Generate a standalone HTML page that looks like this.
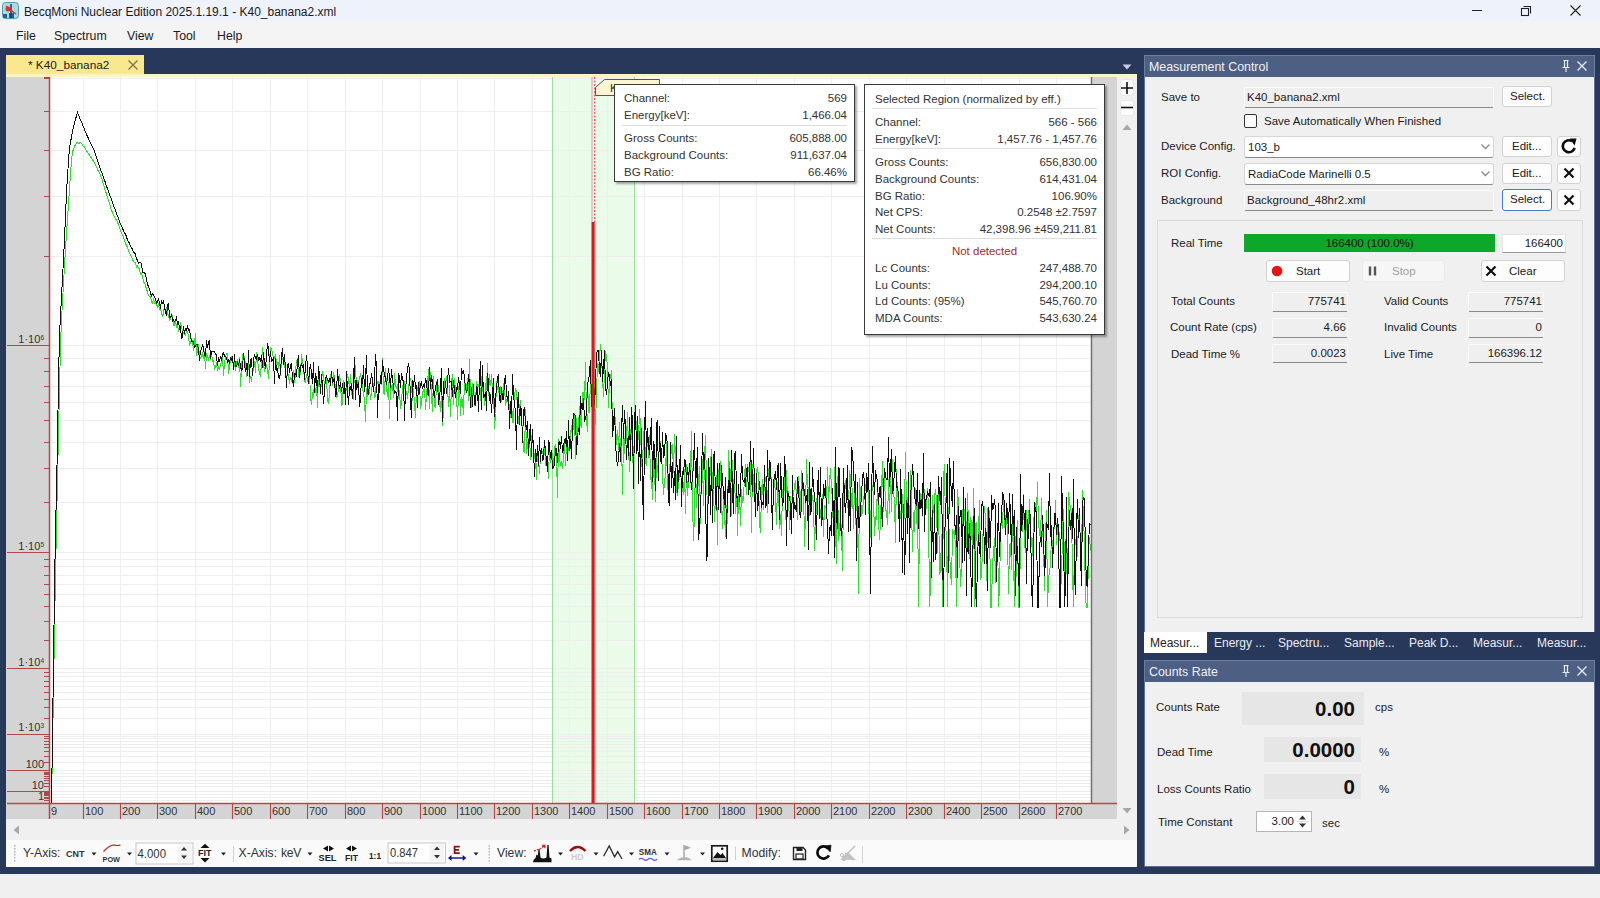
<!DOCTYPE html>
<html><head><meta charset="utf-8">
<style>
*{box-sizing:border-box;margin:0;padding:0}
html,body{width:1600px;height:898px;overflow:hidden;background:#f0f0f0;font-family:"Liberation Sans",sans-serif;color:#1b1b1b}
.a{position:absolute}
.t{position:absolute;white-space:pre;line-height:14px;font-size:11.5px}
#title{left:0;top:0;width:1600px;height:21px;background:#eef2fa}
#menu{left:0;top:21px;width:1600px;height:27px;background:#f4f4f4}
#navy{left:0;top:48px;width:1600px;height:826px;background:#28385a}
.yl{position:absolute;left:6px;width:38px;text-align:right;font-size:11px;line-height:14px;color:#333;white-space:pre}
.yl sup{font-size:6.5px;vertical-align:top;position:relative;top:-1.5px}
.xl{position:absolute;top:804px;font-size:11px;line-height:14px;color:#333;white-space:pre}
.tip{position:absolute;background:#fff;border:1px solid #3a3a3a;box-shadow:2px 2px 2px rgba(0,0,0,.35)}
.tip .t{font-size:11.5px;color:#333}
.btn{position:absolute;background:#fdfdfd;border:1px solid #d2d2d2;border-radius:3px}
.fld{position:absolute;background:#efefef;border:1px solid #fbfbfb;border-bottom:1.5px solid #8a8a8a;border-radius:2px}
.cmb{position:absolute;background:#fff;border:1px solid #d6d6d6;border-bottom:1px solid #8a8a8a;border-radius:3px}
.bfld{position:absolute;background:#e6e6e6}
</style></head><body>
<div id="title" class="a"></div>
<svg class="a" style="left:2px;top:2px" width="17" height="17" viewBox="0 0 17 17">
<rect x="0.5" y="0.5" width="16" height="16" rx="3" fill="#a9dbe0" stroke="#4e9cb0"/>
<path d="M1 12 L5 12 L5 16 L1 16Z M7 11 L12 11 L12 16 L7 16Z" fill="#2a5d93"/>
<path d="M9 2 V16" stroke="#1f3b6b" stroke-width="1.5"/>
<circle cx="6" cy="7" r="2.5" fill="#e0302a"/>
<path d="M4 4 Q8 8 14 12" stroke="#d0342c" stroke-width="1.2" fill="none"/>
</svg>
<div class="t" style="left:24px;top:5px;font-size:12px;color:#1a1a1a">BecqMoni Nuclear Edition 2025.1.19.1 - K40_banana2.xml</div>
<svg class="a" style="left:1460px;top:0" width="140" height="23">
<path d="M12 10.5H22" stroke="#222" stroke-width="1"/>
<rect x="61.5" y="8.5" width="7" height="7" fill="none" stroke="#222" stroke-width="1.1"/>
<path d="M63.5 6.5H70.5V13.5" fill="none" stroke="#222" stroke-width="1.1"/>
<path d="M110.5 5.5L120.5 15.5M120.5 5.5L110.5 15.5" stroke="#222" stroke-width="1.1"/>
</svg>
<div id="menu" class="a"></div>
<div class="t" style="left:16px;top:29px;font-size:12.3px">File</div>
<div class="t" style="left:54px;top:29px;font-size:12.3px">Spectrum</div>
<div class="t" style="left:127px;top:29px;font-size:12.3px">View</div>
<div class="t" style="left:173px;top:29px;font-size:12.3px">Tool</div>
<div class="t" style="left:217px;top:29px;font-size:12.3px">Help</div>
<div id="navy" class="a"></div>

<!-- document tab -->
<div class="a" style="left:6px;top:55px;width:138px;height:20px;background:#fae88f"></div>
<div class="t" style="left:28px;top:58px;font-size:11.8px;color:#222">* K40_banana2</div>
<svg class="a" style="left:126px;top:58px" width="14" height="14"><path d="M2.5 2.5L11.5 11.5M11.5 2.5L2.5 11.5" stroke="#7a7456" stroke-width="1.3"/></svg>
<svg class="a" style="left:1121px;top:63px" width="12" height="8"><path d="M1.5 1.5H10.5L6 6.5Z" fill="#c5cde4"/></svg>
<div class="a" style="left:6px;top:74px;width:1131px;height:3px;background:#fcf5c2"></div>

<!-- document content -->
<div class="a" style="left:6px;top:77px;width:1131px;height:790px;background:#f0f0f0"></div>
<div class="a" style="left:6px;top:77px;width:43px;height:742px;background:#d4d4d4"></div>
<div class="a" style="left:50px;top:77px;width:1041px;height:726px;background:#fff"></div>
<div class="a" style="left:1092px;top:77px;width:25px;height:742px;background:#d4d4d4"></div>
<div class="a" style="left:6px;top:803px;width:1111px;height:16px;background:#d4d4d4"></div>
<div class="a" style="left:6px;top:840px;width:1131px;height:27px;background:#fafafa"></div>

<svg class="a" style="left:0;top:0" width="1600" height="898">
<rect x="552" y="77" width="82.5" height="726" fill="#eafbea"/>
<path d="M50 78.5H1091M50 111.5H1091M50 150.5H1091M50 196.5H1091M50 256.5H1091M50 345.5H1091M50 358.5H1091M50 371.5H1091M50 386.5H1091M50 402.5H1091M50 420.5H1091M50 442.5H1091M50 468.5H1091M50 502.5H1091M50 552.5H1091M50 559.5H1091M50 566.5H1091M50 575.5H1091M50 584.5H1091M50 594.5H1091M50 606.5H1091M50 621.5H1091M50 640.5H1091M50 668.5H1091M50 672.5H1091M50 676.5H1091M50 681.5H1091M50 686.5H1091M50 692.5H1091M50 699.5H1091M50 707.5H1091M50 718.5H1091M50 734.5H1091M50 736.5H1091M50 738.5H1091M50 741.5H1091M50 744.5H1091M50 747.5H1091M50 751.5H1091M50 756.5H1091M50 762.5H1091M50 770.5H1091M50 773.5H1091M50 776.5H1091M50 780.5H1091M50 783.5H1091M50 786.5H1091M50 791.5H1091M50 794.5H1091M50 797.5H1091M50 800.5H1091M50 803.5H1091" stroke="#eeeeee" stroke-width="1" fill="none"/>
<path d="M83.5 77V803M120.5 77V803M157.5 77V803M195.5 77V803M232.5 77V803M270.5 77V803M307.5 77V803M345.5 77V803M382.5 77V803M420.5 77V803M457.5 77V803M494.5 77V803M532.5 77V803M569.5 77V803M607.5 77V803M644.5 77V803M682.5 77V803M719.5 77V803M756.5 77V803M794.5 77V803M831.5 77V803M869.5 77V803M906.5 77V803M944.5 77V803M981.5 77V803M1019.5 77V803M1056.5 77V803" stroke="#efefef" stroke-width="1" fill="none"/>
<path d="M552.5 77V803M634.5 77V803" stroke="#9be39b" stroke-width="1"/>
<path d="M51.5 803.0L52.5 747.7L53.5 690.0L54.5 630.0L55.5 575.0L56.5 525.1L57.5 477.9L58.5 433.7L59.5 389.4L60.5 345.2L61.5 319.5L62.5 301.7L63.5 283.9L64.5 265.9L65.5 248.6L66.5 233.5L67.5 218.6L68.5 203.6L69.5 188.6L70.5 174.3L71.5 160.2L72.5 151.8L73.5 149.4L74.5 146.7L75.5 144.5L76.5 143.0L77.5 142.7L78.5 143.2L79.5 143.0L80.5 142.3L81.5 143.4L82.5 145.1L83.5 146.3L84.5 147.1L85.5 148.5L86.5 151.0L87.5 152.0L88.5 153.6L89.5 155.3L90.5 157.3L91.5 157.8L92.5 160.0L93.5 161.1L94.5 163.2L95.5 164.5L96.5 166.8L97.5 169.6L98.5 171.3L99.5 172.8L100.5 175.7L101.5 177.5L102.5 180.5L103.5 184.6L104.5 187.8L105.5 191.3L106.5 193.7L107.5 197.4L108.5 200.0L109.5 203.7L110.5 206.8L111.5 210.4L112.5 212.6L113.5 215.0L114.5 217.5L115.5 218.4L116.5 220.5L117.5 221.9L118.5 225.1L119.5 227.3L120.5 230.1L121.5 233.3L122.5 235.3L123.5 237.0L124.5 240.3L125.5 243.9L126.5 244.8L127.5 248.1L128.5 250.6L129.5 253.2L130.5 254.9L131.5 256.4L132.5 260.0L133.5 260.6L134.5 262.8L135.5 262.8L136.5 267.3L137.5 265.6L138.5 268.8L139.5 269.0L140.5 274.6L141.5 273.8L142.5 276.4L143.5 282.3L144.5 282.4L145.5 285.5L146.5 289.3L147.5 291.5L148.5 295.9L149.5 296.1L150.5 296.6L151.5 301.0L152.5 304.3L153.5 298.0L154.5 303.1L155.5 302.9L156.5 304.8L157.5 306.8L158.5 304.2L159.5 309.0L160.5 308.2L161.5 314.3L162.5 316.2L163.5 312.8L164.5 305.7L165.5 312.8L166.5 307.4L167.5 313.9L168.5 314.9L169.5 320.0L170.5 318.9L171.5 312.8L172.5 316.3L173.5 325.0L174.5 325.6L175.5 319.0L176.5 328.2L177.5 323.0L178.5 332.4L179.5 326.5L180.5 323.5L181.5 327.5L182.5 331.2L183.5 332.6L184.5 334.7L185.5 335.3L186.5 330.3L187.5 331.3L188.5 335.9L189.5 345.7L190.5 342.7L191.5 339.3L192.5 341.5L193.5 351.1L194.5 341.8L195.5 333.5L196.5 356.3L197.5 350.8L198.5 344.1L199.5 357.5L200.5 358.5L201.5 355.4L202.5 353.4L203.5 359.4L204.5 351.4L205.5 369.4L206.5 353.8L207.5 355.7L208.5 359.2L209.5 356.1L210.5 358.4L211.5 350.9L212.5 362.2L213.5 359.8L214.5 369.0L215.5 367.5L216.5 361.9L217.5 371.1L218.5 366.5L219.5 370.2L220.5 364.7L221.5 360.8L222.5 355.6L223.5 375.9L224.5 363.7L225.5 356.7L226.5 353.5L227.5 353.5L228.5 373.7L229.5 367.1L230.5 359.7L231.5 357.3L232.5 362.1L233.5 362.4L234.5 362.8L235.5 370.5L236.5 363.8L237.5 359.3L238.5 368.0L239.5 357.1L240.5 387.0L241.5 368.6L242.5 353.9L243.5 360.0L244.5 356.0L245.5 365.9L246.5 376.8L247.5 371.5L248.5 356.1L249.5 383.2L250.5 375.6L251.5 381.9L252.5 371.4L253.5 370.1L254.5 361.5L255.5 372.8L256.5 351.8L257.5 359.7L258.5 368.6L259.5 372.8L260.5 377.2L261.5 362.3L262.5 346.6L263.5 364.0L264.5 371.6L265.5 362.3L266.5 366.1L267.5 369.4L268.5 379.1L269.5 360.7L270.5 347.0L271.5 349.8L272.5 352.4L273.5 360.1L274.5 358.2L275.5 353.8L276.5 364.4L277.5 361.7L278.5 369.0L279.5 354.9L280.5 375.7L281.5 360.2L282.5 359.1L283.5 359.8L284.5 361.6L285.5 374.0L286.5 375.7L287.5 374.7L288.5 374.9L289.5 383.8L290.5 376.9L291.5 379.6L292.5 383.8L293.5 370.2L294.5 382.9L295.5 372.5L296.5 360.6L297.5 359.1L298.5 376.7L299.5 366.7L300.5 375.2L301.5 354.0L302.5 361.5L303.5 367.0L304.5 380.9L305.5 382.2L306.5 373.8L307.5 380.4L308.5 383.1L309.5 373.1L310.5 395.5L311.5 405.4L312.5 393.3L313.5 395.4L314.5 383.1L315.5 392.5L316.5 385.0L317.5 407.7L318.5 367.8L319.5 379.3L320.5 394.0L321.5 380.8L322.5 371.4L323.5 375.8L324.5 386.2L325.5 378.8L326.5 376.2L327.5 400.4L328.5 403.7L329.5 393.6L330.5 376.3L331.5 371.5L332.5 386.1L333.5 371.8L334.5 377.3L335.5 389.3L336.5 397.5L337.5 396.6L338.5 388.5L339.5 374.5L340.5 380.5L341.5 405.5L342.5 404.4L343.5 380.5L344.5 387.2L345.5 400.6L346.5 381.6L347.5 374.1L348.5 380.1L349.5 387.7L350.5 374.1L351.5 393.2L352.5 395.6L353.5 399.6L354.5 367.8L355.5 365.4L356.5 388.6L357.5 381.3L358.5 382.7L359.5 377.2L360.5 374.3L361.5 379.8L362.5 388.6L363.5 393.7L364.5 399.9L365.5 422.1L366.5 388.2L367.5 397.3L368.5 386.5L369.5 388.1L370.5 399.5L371.5 392.7L372.5 381.6L373.5 384.4L374.5 397.3L375.5 395.6L376.5 379.4L377.5 383.2L378.5 382.2L379.5 387.8L380.5 377.1L381.5 384.9L382.5 358.3L383.5 392.1L384.5 395.3L385.5 367.8L386.5 387.6L387.5 396.7L388.5 381.9L389.5 418.8L390.5 382.0L391.5 387.3L392.5 384.4L393.5 398.1L394.5 372.7L395.5 384.3L396.5 388.5L397.5 384.0L398.5 399.3L399.5 390.3L400.5 408.8L401.5 403.4L402.5 385.6L403.5 387.9L404.5 380.6L405.5 398.2L406.5 391.2L407.5 398.8L408.5 387.0L409.5 380.9L410.5 377.8L411.5 383.7L412.5 401.1L413.5 388.4L414.5 404.8L415.5 417.7L416.5 389.3L417.5 390.6L418.5 382.8L419.5 382.0L420.5 408.5L421.5 403.9L422.5 392.1L423.5 391.1L424.5 386.9L425.5 409.5L426.5 395.1L427.5 383.9L428.5 369.5L429.5 408.8L430.5 372.5L431.5 395.4L432.5 411.5L433.5 375.6L434.5 406.1L435.5 407.5L436.5 382.6L437.5 378.8L438.5 390.7L439.5 401.2L440.5 412.2L441.5 390.1L442.5 425.7L443.5 411.7L444.5 378.2L445.5 383.5L446.5 376.2L447.5 386.1L448.5 407.1L449.5 385.2L450.5 417.3L451.5 382.4L452.5 374.3L453.5 405.0L454.5 378.2L455.5 390.6L456.5 393.3L457.5 420.1L458.5 393.1L459.5 379.9L460.5 415.9L461.5 397.5L462.5 400.6L463.5 414.5L464.5 377.5L465.5 390.5L466.5 390.2L467.5 378.1L468.5 401.2L469.5 358.8L470.5 397.1L471.5 407.5L472.5 382.8L473.5 386.2L474.5 405.0L475.5 404.3L476.5 380.9L477.5 387.9L478.5 386.5L479.5 380.9L480.5 400.8L481.5 376.3L482.5 392.3L483.5 383.4L484.5 406.0L485.5 383.3L486.5 389.6L487.5 363.2L488.5 395.8L489.5 374.4L490.5 385.6L491.5 374.3L492.5 391.1L493.5 388.1L494.5 428.8L495.5 413.5L496.5 381.5L497.5 389.6L498.5 385.3L499.5 399.3L500.5 385.8L501.5 401.9L502.5 398.5L503.5 382.8L504.5 385.3L505.5 406.3L506.5 400.3L507.5 398.5L508.5 404.5L509.5 404.7L510.5 418.1L511.5 398.4L512.5 422.6L513.5 422.9L514.5 394.2L515.5 389.1L516.5 390.4L517.5 410.3L518.5 424.0L519.5 408.3L520.5 400.3L521.5 420.4L522.5 429.7L523.5 450.9L524.5 453.3L525.5 409.4L526.5 453.9L527.5 444.0L528.5 441.0L529.5 435.9L530.5 459.6L531.5 436.2L532.5 438.2L533.5 446.8L534.5 458.2L535.5 456.2L536.5 480.2L537.5 445.1L538.5 460.8L539.5 473.8L540.5 455.9L541.5 450.0L542.5 452.5L543.5 450.0L544.5 444.4L545.5 466.0L546.5 456.4L547.5 455.4L548.5 479.3L549.5 444.8L550.5 462.5L551.5 454.7L552.5 453.9L553.5 469.0L554.5 446.9L555.5 444.8L556.5 454.8L557.5 498.2L558.5 439.5L559.5 458.5L560.5 464.8L561.5 462.5L562.5 468.9L563.5 456.6L564.5 441.3L565.5 465.5L566.5 443.8L567.5 454.6L568.5 447.9L569.5 448.2L570.5 436.4L571.5 424.8L572.5 438.3L573.5 423.2L574.5 413.3L575.5 459.0L576.5 418.0L577.5 432.5L578.5 427.8L579.5 406.1L580.5 423.1L581.5 427.8L582.5 392.5L583.5 392.7L584.5 400.3L585.5 362.4L586.5 420.2L587.5 431.5L588.5 396.3L589.5 412.6L590.5 376.8L591.5 392.6L592.5 390.9L593.5 377.6L594.5 396.3L595.5 424.9L596.5 393.4L597.5 362.7L598.5 371.8L599.5 357.6L600.5 343.6L601.5 358.1L602.5 378.3L603.5 396.5L604.5 371.2L605.5 351.3L606.5 356.6L607.5 367.7L608.5 407.9L609.5 378.7L610.5 378.1L611.5 370.1L612.5 431.2L613.5 424.0L614.5 413.1L615.5 421.4L616.5 445.3L617.5 430.1L618.5 449.7L619.5 421.9L620.5 452.5L621.5 437.1L622.5 494.7L623.5 435.4L624.5 453.6L625.5 423.8L626.5 440.9L627.5 412.5L628.5 448.1L629.5 472.1L630.5 432.0L631.5 425.5L632.5 455.1L633.5 470.1L634.5 423.3L635.5 418.1L636.5 424.6L637.5 438.0L638.5 440.3L639.5 409.3L640.5 425.1L641.5 464.3L642.5 469.9L643.5 432.0L644.5 431.1L645.5 461.4L646.5 466.1L647.5 430.1L648.5 457.7L649.5 434.9L650.5 479.8L651.5 477.8L652.5 500.0L653.5 457.1L654.5 466.6L655.5 502.4L656.5 456.6L657.5 473.1L658.5 467.1L659.5 436.4L660.5 444.9L661.5 454.4L662.5 472.5L663.5 494.7L664.5 481.2L665.5 474.9L666.5 442.2L667.5 489.5L668.5 480.3L669.5 468.5L670.5 460.5L671.5 447.5L672.5 443.6L673.5 473.4L674.5 434.2L675.5 457.0L676.5 490.2L677.5 495.8L678.5 482.0L679.5 478.5L680.5 457.0L681.5 493.4L682.5 487.6L683.5 495.3L684.5 469.3L685.5 513.9L686.5 464.3L687.5 495.6L688.5 481.8L689.5 468.0L690.5 471.3L691.5 430.7L692.5 501.3L693.5 540.9L694.5 514.0L695.5 462.8L696.5 507.7L697.5 459.9L698.5 486.4L699.5 466.2L700.5 523.9L701.5 460.9L702.5 458.9L703.5 506.1L704.5 456.3L705.5 435.2L706.5 483.2L707.5 507.0L708.5 498.0L709.5 490.4L710.5 463.0L711.5 448.7L712.5 494.1L713.5 489.6L714.5 521.8L715.5 497.3L716.5 474.7L717.5 544.9L718.5 470.6L719.5 466.8L720.5 461.1L721.5 499.6L722.5 529.3L723.5 492.7L724.5 512.8L725.5 536.8L726.5 505.5L727.5 524.4L728.5 450.0L729.5 471.4L730.5 469.0L731.5 516.3L732.5 460.2L733.5 496.8L734.5 470.2L735.5 514.4L736.5 475.1L737.5 535.9L738.5 492.8L739.5 494.6L740.5 525.9L741.5 488.7L742.5 503.3L743.5 499.0L744.5 474.2L745.5 463.8L746.5 494.8L747.5 464.4L748.5 469.8L749.5 474.9L750.5 459.5L751.5 532.5L752.5 464.4L753.5 483.1L754.5 500.8L755.5 495.6L756.5 470.8L757.5 467.6L758.5 477.0L759.5 522.7L760.5 532.6L761.5 491.6L762.5 479.2L763.5 509.9L764.5 474.7L765.5 480.2L766.5 482.9L767.5 512.5L768.5 468.5L769.5 473.8L770.5 466.8L771.5 485.9L772.5 527.9L773.5 486.2L774.5 476.6L775.5 498.1L776.5 524.9L777.5 483.2L778.5 481.7L779.5 528.8L780.5 513.7L781.5 535.5L782.5 488.8L783.5 492.1L784.5 462.3L785.5 519.6L786.5 469.6L787.5 501.6L788.5 490.6L789.5 529.6L790.5 496.2L791.5 509.7L792.5 499.5L793.5 492.9L794.5 486.5L795.5 479.6L796.5 497.8L797.5 520.1L798.5 476.1L799.5 495.6L800.5 512.4L801.5 470.0L802.5 491.3L803.5 482.3L804.5 546.9L805.5 513.3L806.5 459.3L807.5 487.1L808.5 487.6L809.5 515.9L810.5 501.5L811.5 490.2L812.5 500.2L813.5 501.2L814.5 550.5L815.5 519.1L816.5 509.9L817.5 486.7L818.5 487.8L819.5 499.6L820.5 517.6L821.5 517.7L822.5 494.0L823.5 537.1L824.5 505.0L825.5 507.4L826.5 506.1L827.5 467.1L828.5 503.6L829.5 481.9L830.5 468.3L831.5 488.6L832.5 499.7L833.5 534.0L834.5 466.6L835.5 528.9L836.5 564.3L837.5 475.9L838.5 540.5L839.5 531.2L840.5 516.3L841.5 530.6L842.5 571.0L843.5 492.8L844.5 486.1L845.5 480.2L846.5 497.4L847.5 506.5L848.5 509.9L849.5 470.0L850.5 477.1L851.5 506.7L852.5 488.1L853.5 528.5L854.5 483.3L855.5 524.7L856.5 498.0L857.5 500.0L858.5 593.6L859.5 478.3L860.5 494.3L861.5 515.0L862.5 513.3L863.5 496.8L864.5 498.6L865.5 484.1L866.5 491.2L867.5 481.0L868.5 489.3L869.5 536.9L870.5 537.5L871.5 484.5L872.5 486.3L873.5 496.0L874.5 536.0L875.5 515.9L876.5 519.5L877.5 480.5L878.5 520.0L879.5 540.4L880.5 520.4L881.5 489.2L882.5 461.4L883.5 511.6L884.5 470.7L885.5 510.7L886.5 510.6L887.5 525.1L888.5 478.9L889.5 513.6L890.5 475.9L891.5 511.9L892.5 459.5L893.5 494.5L894.5 499.3L895.5 542.8L896.5 469.5L897.5 493.4L898.5 499.9L899.5 501.8L900.5 518.4L901.5 519.6L902.5 493.7L903.5 530.8L904.5 508.4L905.5 451.6L906.5 508.7L907.5 514.1L908.5 481.2L909.5 541.3L910.5 470.2L911.5 506.5L912.5 551.9L913.5 512.0L914.5 532.2L915.5 488.5L916.5 524.4L917.5 488.4L918.5 607.0L919.5 524.9L920.5 493.5L921.5 495.6L922.5 509.1L923.5 489.9L924.5 489.6L925.5 512.3L926.5 506.1L927.5 487.8L928.5 508.3L929.5 607.0L930.5 585.9L931.5 538.0L932.5 495.4L933.5 513.4L934.5 497.2L935.5 488.6L936.5 500.8L937.5 552.8L938.5 494.0L939.5 574.9L940.5 571.6L941.5 534.1L942.5 607.0L943.5 477.4L944.5 464.1L945.5 526.7L946.5 534.6L947.5 607.0L948.5 507.2L949.5 548.6L950.5 573.4L951.5 584.7L952.5 528.7L953.5 532.5L954.5 530.0L955.5 548.2L956.5 607.0L957.5 489.2L958.5 504.3L959.5 548.7L960.5 586.9L961.5 568.2L962.5 509.1L963.5 514.3L964.5 521.0L965.5 497.8L966.5 549.7L967.5 493.2L968.5 525.8L969.5 558.8L970.5 516.7L971.5 522.3L972.5 557.5L973.5 487.9L974.5 607.0L975.5 525.5L976.5 521.6L977.5 559.5L978.5 532.6L979.5 500.3L980.5 579.1L981.5 577.6L982.5 546.7L983.5 521.1L984.5 506.3L985.5 519.9L986.5 580.8L987.5 507.6L988.5 517.6L989.5 510.3L990.5 607.0L991.5 607.0L992.5 562.1L993.5 553.5L994.5 538.5L995.5 581.8L996.5 580.5L997.5 525.4L998.5 607.0L999.5 586.6L1000.5 536.9L1001.5 516.3L1002.5 529.0L1003.5 496.2L1004.5 527.8L1005.5 516.5L1006.5 513.6L1007.5 535.2L1008.5 594.0L1009.5 545.9L1010.5 543.2L1011.5 569.9L1012.5 516.7L1013.5 555.1L1014.5 607.0L1015.5 536.4L1016.5 576.9L1017.5 519.9L1018.5 607.0L1019.5 607.0L1020.5 535.1L1021.5 527.4L1022.5 532.4L1023.5 494.5L1024.5 543.3L1025.5 553.2L1026.5 510.2L1027.5 545.5L1028.5 521.7L1029.5 498.9L1030.5 539.0L1031.5 536.9L1032.5 555.7L1033.5 520.6L1034.5 513.8L1035.5 503.0L1036.5 512.7L1037.5 482.1L1038.5 527.8L1039.5 528.7L1040.5 542.8L1041.5 498.5L1042.5 530.7L1043.5 543.3L1044.5 590.9L1045.5 538.1L1046.5 509.6L1047.5 607.0L1048.5 580.1L1049.5 570.3L1050.5 566.0L1051.5 533.7L1052.5 548.5L1053.5 531.5L1054.5 527.1L1055.5 500.4L1056.5 544.6L1057.5 526.1L1058.5 544.1L1059.5 532.0L1060.5 548.7L1061.5 584.2L1062.5 525.9L1063.5 508.6L1064.5 574.0L1065.5 539.4L1066.5 539.7L1067.5 607.0L1068.5 491.9L1069.5 502.0L1070.5 508.5L1071.5 513.1L1072.5 572.1L1073.5 607.0L1074.5 542.9L1075.5 538.6L1076.5 550.4L1077.5 556.7L1078.5 515.4L1079.5 520.8L1080.5 543.3L1081.5 560.2L1082.5 490.0L1083.5 520.8L1084.5 540.7L1085.5 599.1L1086.5 607.0L1087.5 607.0L1088.5 553.2L1089.5 536.7L1090.5 551.2" stroke="#2ee02e" stroke-width="1" fill="none" shape-rendering="crispEdges"/>
<path d="M51.5 803.0L52.5 734.3L53.5 663.0L54.5 589.0L55.5 531.5L56.5 490.5L57.5 440.4L58.5 381.4L59.5 334.3L60.5 315.7L61.5 296.8L62.5 278.1L63.5 259.3L64.5 238.5L65.5 215.6L66.5 192.5L67.5 176.0L68.5 161.4L69.5 147.5L70.5 142.1L71.5 137.1L72.5 132.0L73.5 126.5L74.5 123.0L75.5 119.6L76.5 115.6L77.5 112.4L78.5 115.0L79.5 117.6L80.5 119.7L81.5 121.9L82.5 124.7L83.5 127.3L84.5 129.4L85.5 131.8L86.5 134.6L87.5 136.5L88.5 138.4L89.5 140.9L90.5 143.3L91.5 145.0L92.5 147.1L93.5 148.9L94.5 151.8L95.5 154.4L96.5 157.5L97.5 160.9L98.5 163.2L99.5 166.0L100.5 169.6L101.5 171.7L102.5 174.7L103.5 177.5L104.5 180.3L105.5 182.8L106.5 186.5L107.5 188.4L108.5 191.1L109.5 195.0L110.5 196.7L111.5 199.8L112.5 202.0L113.5 205.3L114.5 207.9L115.5 210.5L116.5 213.8L117.5 215.8L118.5 218.9L119.5 221.4L120.5 224.4L121.5 225.7L122.5 228.2L123.5 230.8L124.5 232.6L125.5 234.5L126.5 236.4L127.5 240.5L128.5 241.3L129.5 243.7L130.5 246.0L131.5 248.6L132.5 248.7L133.5 252.9L134.5 253.0L135.5 254.0L136.5 259.6L137.5 259.8L138.5 263.3L139.5 262.9L140.5 262.6L141.5 263.5L142.5 272.5L143.5 272.7L144.5 273.0L145.5 274.0L146.5 279.5L147.5 285.2L148.5 285.7L149.5 289.5L150.5 292.9L151.5 295.9L152.5 293.9L153.5 295.2L154.5 297.5L155.5 298.9L156.5 303.4L157.5 302.0L158.5 297.7L159.5 303.3L160.5 308.7L161.5 300.3L162.5 304.1L163.5 299.7L164.5 307.9L165.5 311.0L166.5 316.0L167.5 306.4L168.5 302.8L169.5 317.0L170.5 317.5L171.5 313.7L172.5 321.0L173.5 319.9L174.5 321.5L175.5 320.4L176.5 317.7L177.5 323.7L178.5 320.9L179.5 328.3L180.5 325.9L181.5 338.8L182.5 336.3L183.5 326.2L184.5 333.8L185.5 328.9L186.5 329.9L187.5 326.8L188.5 330.2L189.5 330.0L190.5 336.7L191.5 340.8L192.5 341.9L193.5 342.0L194.5 347.4L195.5 345.7L196.5 344.8L197.5 344.5L198.5 349.5L199.5 360.8L200.5 350.6L201.5 349.2L202.5 344.5L203.5 347.8L204.5 355.5L205.5 356.4L206.5 340.4L207.5 348.0L208.5 342.0L209.5 340.5L210.5 358.9L211.5 351.6L212.5 351.4L213.5 351.1L214.5 351.6L215.5 354.1L216.5 354.6L217.5 366.4L218.5 357.5L219.5 361.9L220.5 356.3L221.5 360.7L222.5 353.7L223.5 352.6L224.5 356.2L225.5 356.4L226.5 358.1L227.5 362.2L228.5 360.4L229.5 363.0L230.5 356.9L231.5 359.8L232.5 355.9L233.5 370.4L234.5 354.2L235.5 366.5L236.5 366.6L237.5 362.7L238.5 365.7L239.5 359.5L240.5 366.3L241.5 370.5L242.5 369.0L243.5 352.7L244.5 362.4L245.5 372.4L246.5 363.2L247.5 376.3L248.5 350.0L249.5 376.6L250.5 360.0L251.5 359.1L252.5 375.5L253.5 360.3L254.5 354.4L255.5 358.2L256.5 359.6L257.5 353.6L258.5 359.7L259.5 357.8L260.5 361.4L261.5 354.6L262.5 368.1L263.5 352.4L264.5 363.5L265.5 368.7L266.5 354.9L267.5 343.1L268.5 348.9L269.5 362.1L270.5 350.9L271.5 362.2L272.5 359.6L273.5 358.1L274.5 383.7L275.5 358.3L276.5 371.1L277.5 368.2L278.5 377.1L279.5 378.2L280.5 372.7L281.5 355.4L282.5 348.1L283.5 364.9L284.5 354.5L285.5 368.5L286.5 387.6L287.5 365.4L288.5 362.9L289.5 372.6L290.5 365.5L291.5 363.2L292.5 379.3L293.5 387.1L294.5 373.3L295.5 373.8L296.5 375.9L297.5 362.1L298.5 355.3L299.5 378.4L300.5 366.6L301.5 364.4L302.5 367.0L303.5 363.8L304.5 379.7L305.5 367.6L306.5 354.9L307.5 367.5L308.5 383.6L309.5 370.2L310.5 363.7L311.5 373.4L312.5 384.2L313.5 361.7L314.5 393.1L315.5 373.1L316.5 379.1L317.5 393.3L318.5 366.4L319.5 376.0L320.5 393.9L321.5 373.8L322.5 385.7L323.5 404.4L324.5 389.4L325.5 378.7L326.5 374.9L327.5 380.4L328.5 382.0L329.5 377.6L330.5 385.6L331.5 370.6L332.5 382.1L333.5 380.7L334.5 378.3L335.5 397.2L336.5 393.3L337.5 368.8L338.5 381.8L339.5 389.1L340.5 382.1L341.5 391.5L342.5 382.6L343.5 393.5L344.5 382.4L345.5 404.9L346.5 370.7L347.5 391.3L348.5 404.8L349.5 387.7L350.5 389.3L351.5 383.1L352.5 398.8L353.5 380.1L354.5 356.9L355.5 400.3L356.5 380.4L357.5 388.0L358.5 381.9L359.5 407.2L360.5 398.3L361.5 378.5L362.5 384.2L363.5 365.4L364.5 392.2L365.5 381.4L366.5 355.2L367.5 392.7L368.5 394.4L369.5 383.5L370.5 383.5L371.5 373.0L372.5 381.2L373.5 392.1L374.5 380.0L375.5 353.9L376.5 367.7L377.5 418.0L378.5 383.9L379.5 393.1L380.5 374.7L381.5 384.4L382.5 360.5L383.5 371.5L384.5 372.2L385.5 380.6L386.5 383.5L387.5 379.0L388.5 368.1L389.5 377.0L390.5 388.0L391.5 368.8L392.5 381.5L393.5 385.0L394.5 394.3L395.5 391.5L396.5 392.6L397.5 421.3L398.5 372.7L399.5 378.0L400.5 387.8L401.5 372.7L402.5 380.0L403.5 381.0L404.5 420.6L405.5 388.8L406.5 379.5L407.5 367.2L408.5 364.8L409.5 369.5L410.5 402.0L411.5 417.5L412.5 379.9L413.5 386.7L414.5 375.5L415.5 388.9L416.5 384.7L417.5 408.0L418.5 382.2L419.5 393.7L420.5 383.6L421.5 382.2L422.5 389.4L423.5 383.9L424.5 388.0L425.5 378.4L426.5 381.5L427.5 394.9L428.5 395.4L429.5 366.8L430.5 388.9L431.5 375.3L432.5 382.5L433.5 394.9L434.5 397.4L435.5 385.8L436.5 384.1L437.5 379.5L438.5 404.8L439.5 395.2L440.5 388.4L441.5 367.6L442.5 421.9L443.5 381.4L444.5 394.3L445.5 381.4L446.5 393.6L447.5 382.2L448.5 367.6L449.5 382.2L450.5 381.2L451.5 381.9L452.5 397.0L453.5 379.6L454.5 389.4L455.5 397.8L456.5 387.1L457.5 389.6L458.5 376.7L459.5 387.0L460.5 393.6L461.5 368.0L462.5 373.6L463.5 370.1L464.5 378.3L465.5 387.7L466.5 391.9L467.5 389.9L468.5 373.8L469.5 384.5L470.5 407.8L471.5 386.8L472.5 407.2L473.5 384.5L474.5 404.3L475.5 405.4L476.5 385.7L477.5 388.6L478.5 412.4L479.5 378.0L480.5 361.2L481.5 410.1L482.5 365.5L483.5 398.4L484.5 395.8L485.5 391.6L486.5 410.7L487.5 372.7L488.5 383.1L489.5 400.6L490.5 394.0L491.5 412.9L492.5 395.4L493.5 378.4L494.5 416.8L495.5 397.2L496.5 389.3L497.5 377.7L498.5 374.2L499.5 398.4L500.5 403.0L501.5 387.1L502.5 399.1L503.5 399.2L504.5 381.3L505.5 374.7L506.5 393.6L507.5 400.7L508.5 391.1L509.5 428.8L510.5 401.0L511.5 417.8L512.5 373.9L513.5 395.6L514.5 404.8L515.5 411.0L516.5 450.1L517.5 401.7L518.5 391.9L519.5 424.7L520.5 407.0L521.5 408.6L522.5 443.4L523.5 410.3L524.5 407.4L525.5 423.7L526.5 429.7L527.5 420.8L528.5 455.7L529.5 434.0L530.5 424.1L531.5 457.2L532.5 429.2L533.5 449.4L534.5 477.0L535.5 448.8L536.5 461.7L537.5 444.9L538.5 466.3L539.5 437.5L540.5 461.5L541.5 447.6L542.5 461.1L543.5 458.1L544.5 439.9L545.5 452.1L546.5 460.0L547.5 472.3L548.5 439.8L549.5 444.7L550.5 458.3L551.5 450.5L552.5 468.2L553.5 467.8L554.5 464.8L555.5 448.2L556.5 448.7L557.5 463.1L558.5 442.6L559.5 441.8L560.5 448.9L561.5 436.1L562.5 452.5L563.5 448.5L564.5 438.7L565.5 444.4L566.5 431.2L567.5 461.3L568.5 419.6L569.5 450.6L570.5 439.2L571.5 458.8L572.5 424.5L573.5 413.3L574.5 414.5L575.5 415.6L576.5 454.7L577.5 436.9L578.5 428.3L579.5 434.6L580.5 396.2L581.5 408.6L582.5 409.4L583.5 397.6L584.5 422.2L585.5 418.2L586.5 413.9L587.5 382.7L588.5 381.4L589.5 372.9L590.5 359.6L591.5 407.1L592.5 386.1L593.5 370.6L594.5 405.2L595.5 385.1L596.5 352.8L597.5 350.8L598.5 351.0L599.5 371.6L600.5 377.0L601.5 349.9L602.5 381.5L603.5 367.7L604.5 350.1L605.5 387.4L606.5 395.3L607.5 383.2L608.5 372.2L609.5 376.6L610.5 385.6L611.5 379.0L612.5 437.3L613.5 424.3L614.5 408.5L615.5 441.5L616.5 459.9L617.5 463.9L618.5 460.2L619.5 442.6L620.5 461.5L621.5 432.4L622.5 404.7L623.5 438.8L624.5 410.1L625.5 428.0L626.5 460.0L627.5 438.1L628.5 455.6L629.5 416.9L630.5 461.1L631.5 407.4L632.5 421.8L633.5 489.3L634.5 418.6L635.5 404.8L636.5 454.3L637.5 415.9L638.5 484.4L639.5 431.3L640.5 481.3L641.5 428.5L642.5 487.8L643.5 520.1L644.5 433.7L645.5 400.7L646.5 458.4L647.5 428.5L648.5 444.4L649.5 455.3L650.5 436.2L651.5 418.4L652.5 482.2L653.5 440.7L654.5 446.3L655.5 491.2L656.5 424.8L657.5 420.4L658.5 481.3L659.5 426.2L660.5 459.0L661.5 464.3L662.5 431.9L663.5 456.7L664.5 455.1L665.5 432.9L666.5 437.4L667.5 445.1L668.5 500.0L669.5 505.9L670.5 442.0L671.5 487.9L672.5 462.4L673.5 492.9L674.5 470.7L675.5 499.9L676.5 435.6L677.5 493.3L678.5 471.1L679.5 473.1L680.5 444.8L681.5 507.3L682.5 470.9L683.5 475.4L684.5 459.6L685.5 461.3L686.5 482.9L687.5 467.1L688.5 481.6L689.5 463.1L690.5 476.1L691.5 490.2L692.5 475.3L693.5 467.1L694.5 432.6L695.5 487.8L696.5 469.6L697.5 447.4L698.5 540.3L699.5 527.7L700.5 509.4L701.5 480.9L702.5 432.6L703.5 470.0L704.5 453.9L705.5 484.2L706.5 560.7L707.5 553.4L708.5 458.2L709.5 475.5L710.5 514.7L711.5 456.8L712.5 523.0L713.5 456.9L714.5 451.2L715.5 499.9L716.5 509.9L717.5 463.1L718.5 509.9L719.5 463.1L720.5 513.3L721.5 464.6L722.5 479.8L723.5 492.5L724.5 505.1L725.5 477.1L726.5 538.8L727.5 489.4L728.5 492.5L729.5 468.5L730.5 516.9L731.5 449.6L732.5 491.1L733.5 513.9L734.5 455.9L735.5 451.2L736.5 488.8L737.5 507.3L738.5 484.4L739.5 502.1L740.5 492.5L741.5 454.0L742.5 476.8L743.5 482.3L744.5 478.1L745.5 487.3L746.5 468.2L747.5 467.7L748.5 495.4L749.5 484.3L750.5 441.4L751.5 477.7L752.5 491.6L753.5 447.8L754.5 487.3L755.5 516.6L756.5 473.3L757.5 511.2L758.5 500.4L759.5 481.1L760.5 491.6L761.5 508.0L762.5 502.5L763.5 503.8L764.5 465.1L765.5 507.6L766.5 503.7L767.5 450.4L768.5 503.6L769.5 460.1L770.5 463.4L771.5 494.1L772.5 530.1L773.5 480.9L774.5 476.5L775.5 470.8L776.5 489.7L777.5 466.7L778.5 463.5L779.5 519.6L780.5 463.1L781.5 488.2L782.5 506.2L783.5 499.9L784.5 455.6L785.5 471.7L786.5 545.7L787.5 490.7L788.5 496.0L789.5 496.9L790.5 505.5L791.5 533.9L792.5 474.6L793.5 517.6L794.5 502.1L795.5 508.3L796.5 511.8L797.5 477.3L798.5 484.9L799.5 510.6L800.5 518.3L801.5 505.3L802.5 473.3L803.5 491.0L804.5 488.7L805.5 502.0L806.5 500.3L807.5 489.3L808.5 550.3L809.5 461.9L810.5 514.7L811.5 508.7L812.5 467.0L813.5 489.6L814.5 493.8L815.5 509.5L816.5 540.2L817.5 490.7L818.5 470.1L819.5 518.7L820.5 467.1L821.5 525.9L822.5 514.2L823.5 484.2L824.5 495.6L825.5 480.5L826.5 514.8L827.5 523.4L828.5 553.6L829.5 529.1L830.5 524.9L831.5 536.4L832.5 488.3L833.5 512.1L834.5 558.4L835.5 447.1L836.5 516.3L837.5 529.2L838.5 467.5L839.5 468.6L840.5 525.2L841.5 536.1L842.5 519.9L843.5 468.1L844.5 499.9L845.5 513.4L846.5 492.3L847.5 465.5L848.5 531.6L849.5 500.5L850.5 531.0L851.5 446.9L852.5 452.7L853.5 468.7L854.5 492.8L855.5 474.2L856.5 560.5L857.5 482.1L858.5 527.7L859.5 527.0L860.5 507.0L861.5 497.2L862.5 475.1L863.5 472.5L864.5 482.4L865.5 515.1L866.5 473.5L867.5 492.2L868.5 463.5L869.5 514.9L870.5 593.9L871.5 502.4L872.5 445.8L873.5 478.9L874.5 495.4L875.5 469.9L876.5 478.4L877.5 479.4L878.5 505.3L879.5 489.1L880.5 486.1L881.5 510.2L882.5 527.1L883.5 488.1L884.5 468.2L885.5 475.7L886.5 479.7L887.5 479.8L888.5 437.5L889.5 486.7L890.5 468.1L891.5 449.4L892.5 493.5L893.5 488.1L894.5 469.1L895.5 455.6L896.5 487.8L897.5 486.8L898.5 494.8L899.5 541.8L900.5 469.1L901.5 506.5L902.5 572.5L903.5 503.9L904.5 575.1L905.5 536.8L906.5 500.0L907.5 534.2L908.5 472.3L909.5 563.1L910.5 494.1L911.5 486.2L912.5 464.3L913.5 477.3L914.5 496.4L915.5 501.4L916.5 506.2L917.5 473.1L918.5 529.0L919.5 489.8L920.5 509.0L921.5 498.7L922.5 515.6L923.5 453.3L924.5 531.5L925.5 499.9L926.5 499.7L927.5 490.6L928.5 495.4L929.5 496.5L930.5 482.1L931.5 578.2L932.5 510.3L933.5 562.2L934.5 504.2L935.5 560.1L936.5 549.3L937.5 514.6L938.5 475.7L939.5 496.4L940.5 504.7L941.5 476.7L942.5 550.7L943.5 607.0L944.5 529.7L945.5 524.8L946.5 482.5L947.5 463.6L948.5 572.8L949.5 458.0L950.5 476.7L951.5 494.0L952.5 507.0L953.5 460.6L954.5 516.3L955.5 535.4L956.5 515.2L957.5 578.0L958.5 506.3L959.5 524.1L960.5 511.0L961.5 510.6L962.5 562.7L963.5 487.3L964.5 561.3L965.5 498.1L966.5 595.8L967.5 512.4L968.5 553.7L969.5 522.8L970.5 547.4L971.5 607.0L972.5 568.8L973.5 523.5L974.5 508.2L975.5 590.0L976.5 607.0L977.5 559.0L978.5 534.2L979.5 549.8L980.5 557.3L981.5 505.1L982.5 502.7L983.5 508.6L984.5 564.3L985.5 527.6L986.5 536.4L987.5 591.2L988.5 507.0L989.5 528.7L990.5 547.7L991.5 495.1L992.5 510.0L993.5 507.5L994.5 499.3L995.5 510.6L996.5 581.7L997.5 543.1L998.5 503.0L999.5 557.4L1000.5 528.5L1001.5 517.9L1002.5 492.2L1003.5 495.2L1004.5 504.3L1005.5 534.8L1006.5 503.5L1007.5 513.2L1008.5 533.5L1009.5 492.6L1010.5 513.5L1011.5 555.2L1012.5 494.0L1013.5 535.8L1014.5 510.1L1015.5 596.1L1016.5 527.5L1017.5 562.8L1018.5 564.0L1019.5 607.0L1020.5 474.0L1021.5 530.9L1022.5 518.6L1023.5 495.5L1024.5 529.5L1025.5 510.2L1026.5 584.2L1027.5 518.9L1028.5 539.1L1029.5 509.8L1030.5 518.9L1031.5 585.4L1032.5 607.0L1033.5 564.2L1034.5 502.5L1035.5 511.0L1036.5 512.0L1037.5 607.0L1038.5 607.0L1039.5 547.6L1040.5 536.7L1041.5 547.3L1042.5 515.2L1043.5 531.9L1044.5 575.7L1045.5 560.4L1046.5 522.6L1047.5 525.1L1048.5 530.1L1049.5 473.1L1050.5 537.1L1051.5 524.8L1052.5 568.0L1053.5 541.4L1054.5 514.0L1055.5 513.2L1056.5 535.2L1057.5 518.5L1058.5 528.9L1059.5 607.0L1060.5 607.0L1061.5 476.2L1062.5 508.5L1063.5 534.0L1064.5 607.0L1065.5 586.7L1066.5 497.3L1067.5 607.0L1068.5 544.5L1069.5 509.6L1070.5 529.7L1071.5 513.1L1072.5 539.0L1073.5 478.6L1074.5 575.6L1075.5 594.6L1076.5 527.6L1077.5 499.1L1078.5 538.2L1079.5 508.3L1080.5 555.4L1081.5 585.7L1082.5 501.3L1083.5 498.0L1084.5 499.0L1085.5 553.3L1086.5 585.4L1087.5 586.4L1088.5 546.6L1089.5 522.9L1090.5 525.2" stroke="#111" stroke-width="1" fill="none" shape-rendering="crispEdges"/>
<path d="M592 77V222" stroke="#e890a8" stroke-width="1"/><path d="M594.8 77V222" stroke="#e82828" stroke-width="1" stroke-dasharray="2 1.5"/>
<rect x="591.5" y="222" width="3.2" height="581" fill="#e8141c"/>
<path d="M7 803.5H49M7 791.5H49M7 770.5H49M7 734.5H49M7 668.5H49M7 552.5H49M7 345.5H49M44 800.5H49M44 798.5H49M44 797.5H49M44 795.5H49M44 794.5H49M44 793.5H49M44 793.5H49M44 792.5H49M44 786.5H49M44 783.5H49M44 780.5H49M44 778.5H49M44 776.5H49M44 774.5H49M44 773.5H49M44 772.5H49M44 762.5H49M44 756.5H49M44 751.5H49M44 747.5H49M44 744.5H49M44 741.5H49M44 738.5H49M44 736.5H49M44 718.5H49M44 707.5H49M44 699.5H49M44 692.5H49M44 686.5H49M44 681.5H49M44 676.5H49M44 672.5H49M44 640.5H49M44 621.5H49M44 606.5H49M44 594.5H49M44 584.5H49M44 575.5H49M44 566.5H49M44 559.5H49M44 502.5H49M44 468.5H49M44 442.5H49M44 420.5H49M44 402.5H49M44 386.5H49M44 371.5H49M44 358.5H49M44 256.5H49M44 196.5H49M44 150.5H49M44 111.5H49M44 78.5H49M44 77.5H49" stroke="#b84646" stroke-width="1.1" fill="none"/>
<path d="M49.5 77V819M7 803.5H1117" stroke="#b84646" stroke-width="1.5" fill="none"/>
<path d="M83.5 803V819M120.5 803V819M157.5 803V819M195.5 803V819M232.5 803V819M270.5 803V819M307.5 803V819M345.5 803V819M382.5 803V819M420.5 803V819M457.5 803V819M494.5 803V819M532.5 803V819M569.5 803V819M607.5 803V819M644.5 803V819M682.5 803V819M719.5 803V819M756.5 803V819M794.5 803V819M831.5 803V819M869.5 803V819M906.5 803V819M944.5 803V819M981.5 803V819M1019.5 803V819M1056.5 803V819" stroke="#b84646" stroke-width="1.1" fill="none"/>
<path d="M1091.5 77V803" stroke="#707070" stroke-width="1.5"/>
</svg>
<div class="yl" style="top:332px">1·10<sup>6</sup></div>
<div class="yl" style="top:539px">1·10<sup>5</sup></div>
<div class="yl" style="top:655px">1·10<sup>4</sup></div>
<div class="yl" style="top:720px">1·10<sup>3</sup></div>
<div class="yl" style="top:757px">100</div>
<div class="yl" style="top:778px">10</div>
<div class="yl" style="top:789px">1</div>
<div class="xl" style="left:51px">9</div>
<div class="xl" style="left:85px">100</div>
<div class="xl" style="left:122px">200</div>
<div class="xl" style="left:159px">300</div>
<div class="xl" style="left:197px">400</div>
<div class="xl" style="left:234px">500</div>
<div class="xl" style="left:272px">600</div>
<div class="xl" style="left:309px">700</div>
<div class="xl" style="left:347px">800</div>
<div class="xl" style="left:384px">900</div>
<div class="xl" style="left:422px">1000</div>
<div class="xl" style="left:459px">1100</div>
<div class="xl" style="left:496px">1200</div>
<div class="xl" style="left:534px">1300</div>
<div class="xl" style="left:571px">1400</div>
<div class="xl" style="left:609px">1500</div>
<div class="xl" style="left:646px">1600</div>
<div class="xl" style="left:684px">1700</div>
<div class="xl" style="left:721px">1800</div>
<div class="xl" style="left:758px">1900</div>
<div class="xl" style="left:796px">2000</div>
<div class="xl" style="left:833px">2100</div>
<div class="xl" style="left:871px">2200</div>
<div class="xl" style="left:908px">2300</div>
<div class="xl" style="left:946px">2400</div>
<div class="xl" style="left:983px">2500</div>
<div class="xl" style="left:1021px">2600</div>
<div class="xl" style="left:1058px">2700</div>

<!-- zoom buttons -->
<div class="btn" style="left:1120px;top:79px;width:14px;height:17px;border-color:#e8e8e8"></div>
<div class="btn" style="left:1120px;top:100px;width:14px;height:16px;border-color:#e8e8e8"></div>
<svg class="a" style="left:1117px;top:77px" width="20" height="760">
<path d="M10 5V17M4 11H16" stroke="#111" stroke-width="1.6"/>
<path d="M4 30.5H16" stroke="#111" stroke-width="1.6"/>
<path d="M5.5 53H14.5L10 47.5Z" fill="#a8a8a8"/>
<path d="M5.5 731H14.5L10 736.5Z" fill="#a8a8a8"/>
<path d="M7 748.5V757.5L12.5 753Z" fill="#a8a8a8"/>
</svg>
<svg class="a" style="left:6px;top:819px" width="20" height="21"><path d="M13 6.5V15.5L7.5 11Z" fill="#a8a8a8"/></svg>

<!-- K40 flag -->
<svg class="a" style="left:594px;top:78px" width="70" height="20">
<path d="M1.5 9.5L10.5 1.5H65.5V17.5H1.5Z" fill="#fcf5d2" stroke="#555" stroke-width="1"/>
</svg>
<div class="t" style="left:610px;top:81px;font-size:11.5px;color:#333">K40</div>

<!-- tooltip 1 -->
<div class="tip" style="left:614px;top:84px;width:241px;height:98px">
<div class="t" style="left:9px;top:6px">Channel:</div><div class="t" style="right:7px;top:6px">569</div>
<div class="t" style="left:9px;top:23px">Energy[keV]:</div><div class="t" style="right:7px;top:23px">1,466.04</div>
<div class="a" style="left:7px;top:40px;width:225px;height:1px;background:#ddd"></div>
<div class="t" style="left:9px;top:46px">Gross Counts:</div><div class="t" style="right:7px;top:46px">605,888.00</div>
<div class="t" style="left:9px;top:63px">Background Counts:</div><div class="t" style="right:7px;top:63px">911,637.04</div>
<div class="t" style="left:9px;top:80px">BG Ratio:</div><div class="t" style="right:7px;top:80px">66.46%</div>
</div>

<!-- tooltip 2 -->
<div class="tip" style="left:864px;top:84px;width:241px;height:251px">
<div class="t" style="left:10px;top:7px">Selected Region (normalized by eff.)</div>
<div class="a" style="left:7px;top:23px;width:225px;height:1px;background:#ddd"></div>
<div class="t" style="left:10px;top:30px">Channel:</div><div class="t" style="right:7px;top:30px">566 - 566</div>
<div class="t" style="left:10px;top:47px">Energy[keV]:</div><div class="t" style="right:7px;top:47px">1,457.76 - 1,457.76</div>
<div class="a" style="left:7px;top:63px;width:225px;height:1px;background:#ddd"></div>
<div class="t" style="left:10px;top:70px">Gross Counts:</div><div class="t" style="right:7px;top:70px">656,830.00</div>
<div class="t" style="left:10px;top:87px">Background Counts:</div><div class="t" style="right:7px;top:87px">614,431.04</div>
<div class="t" style="left:10px;top:104px">BG Ratio:</div><div class="t" style="right:7px;top:104px">106.90%</div>
<div class="t" style="left:10px;top:120px">Net CPS:</div><div class="t" style="right:7px;top:120px">0.2548 ±2.7597</div>
<div class="t" style="left:10px;top:137px">Net Counts:</div><div class="t" style="right:7px;top:137px">42,398.96 ±459,211.81</div>
<div class="a" style="left:7px;top:153px;width:225px;height:1px;background:#ddd"></div>
<div class="t" style="left:0;width:239px;text-align:center;top:159px;color:#a52a2a">Not detected</div>
<div class="t" style="left:10px;top:176px">Lc Counts:</div><div class="t" style="right:7px;top:176px">247,488.70</div>
<div class="t" style="left:10px;top:193px">Lu Counts:</div><div class="t" style="right:7px;top:193px">294,200.10</div>
<div class="t" style="left:10px;top:209px">Ld Counts: (95%)</div><div class="t" style="right:7px;top:209px">545,760.70</div>
<div class="t" style="left:10px;top:226px">MDA Counts:</div><div class="t" style="right:7px;top:226px">543,630.24</div>
</div>

<!-- bottom toolbar -->
<svg class="a" style="left:0;top:836px" width="900" height="32" font-family="Liberation Sans" >
<g fill="#b0b0b0"><rect x="14" y="9" width="1.5" height="1.5"/><rect x="14" y="12" width="1.5" height="1.5"/><rect x="14" y="15" width="1.5" height="1.5"/><rect x="14" y="18" width="1.5" height="1.5"/><rect x="14" y="21" width="1.5" height="1.5"/><rect x="14" y="24" width="1.5" height="1.5"/></g>
<g fill="#222">
<path d="M91.5 16.5H96.5L94 19.5Z"/><path d="M127 16.5H132L129.5 19.5Z"/><path d="M221 16.5H226L223.5 19.5Z"/>
<path d="M307.5 16.5H312.5L310 19.5Z"/><path d="M473.5 16.5H478.5L476 19.5Z"/>
<path d="M558 16.5H563L560.5 19.5Z"/><path d="M593.5 16.5H598.5L596 19.5Z"/><path d="M629 16.5H634L631.5 19.5Z"/>
<path d="M664.5 16.5H669.5L667 19.5Z"/><path d="M700 16.5H705L702.5 19.5Z"/>
</g>
<text x="66" y="21.3" font-size="9.6" font-weight="bold" fill="#333" textLength="18.5" lengthAdjust="spacingAndGlyphs">CNT</text>
<path d="M103.5 15.5Q110 8.5 114 9.2T120.5 9" stroke="#d42020" stroke-width="1.2" fill="none"/>
<text x="102.5" y="25.8" font-size="8" font-weight="bold" fill="#333" textLength="17.5" lengthAdjust="spacingAndGlyphs">POW</text>
<rect x="136" y="7" width="57" height="21" fill="#fff" stroke="#c6c6c6"/>
<rect x="177.5" y="8.5" width="14" height="18" fill="#f4f4f4"/>
<path d="M181 14.5H187L184 11Z M181 19.5H187L184 23Z" fill="#333"/>
<text x="137.5" y="21.5" font-size="12.4" fill="#333" textLength="28.5" lengthAdjust="spacingAndGlyphs">4.000</text>
<path d="M200.5 12H209.5L205 7.7Z M200.5 22H209.5L205 26.6Z" fill="#111"/>
<text x="198" y="20.2" font-size="8.8" font-weight="bold" fill="#222" textLength="13.5" lengthAdjust="spacingAndGlyphs">FIT</text>
<path d="M233.5 10V26" stroke="#d0d0d0"/>
<path d="M328 9.5V15.5L323 12.5Z M329 9.5V15.5L334 12.5Z M351 9.5V15.5L346 12.5Z M352 9.5V15.5L357 12.5Z" fill="#111"/>
<text x="318.5" y="24.7" font-size="9.3" font-weight="bold" fill="#222" textLength="18" lengthAdjust="spacingAndGlyphs">SEL</text>
<text x="345" y="24.7" font-size="9.3" font-weight="bold" fill="#222" textLength="13" lengthAdjust="spacingAndGlyphs">FIT</text>
<text x="369" y="23" font-size="9.5" font-weight="bold" fill="#222" textLength="12" lengthAdjust="spacingAndGlyphs">1:1</text>
<rect x="388" y="7" width="57.5" height="20" fill="#fff" stroke="#c6c6c6"/>
<rect x="429.5" y="8.5" width="14.5" height="17" fill="#f4f4f4"/>
<path d="M434 14H440L437 10.5Z M434 19H440L437 22.5Z" fill="#333"/>
<text x="390" y="21.3" font-size="12.4" fill="#333" textLength="28" lengthAdjust="spacingAndGlyphs">0.847</text>
<path d="M459.8 10.6H454.6V17.2H459.8M454.6 13.8H459" stroke="#8e1212" stroke-width="1.8" fill="none"/>
<path d="M450.5 22H464" stroke="#2b2b98" stroke-width="1.6"/><path d="M448 22L451.5 19V25Z M466.2 22L462.7 19V25Z" fill="#10108a"/>
<g fill="#b8b8b8"><rect x="488.5" y="9" width="1.5" height="1.5"/><rect x="488.5" y="12" width="1.5" height="1.5"/><rect x="488.5" y="15" width="1.5" height="1.5"/><rect x="488.5" y="18" width="1.5" height="1.5"/><rect x="488.5" y="21" width="1.5" height="1.5"/><rect x="488.5" y="24" width="1.5" height="1.5"/></g>
<path d="M533 26.3H551.5V22.5L549.5 21.5L548.6 9H547.4L546.5 21.5Q543 23.5 540.5 21.5L539.5 13H538.5L537.8 19.5L536.5 18.5L535.5 22L533.5 24Z" fill="#111"/>
<path d="M534 15.2L538 13.5L541 12.5L543.5 10" stroke="#e01818" stroke-width="1.3" stroke-dasharray="2 1" fill="none"/><path d="M541.5 8.7H545.5V12.7Z" fill="#e01818"/>
<path d="M570 15Q577.5 7 585.5 15" stroke="#9a1010" stroke-width="2.4" fill="none"/>
<text x="571" y="24.2" font-size="9.5" font-weight="bold" fill="#cdcdcd" textLength="12.6" lengthAdjust="spacingAndGlyphs">HD</text>
<path d="M603.6 20.3L609.2 10L614.6 20.9L617.7 15.6L622 23" stroke="#2a2a2a" stroke-width="1.3" fill="none"/>
<text x="638.8" y="19" font-size="8.8" font-weight="bold" fill="#333" textLength="18" lengthAdjust="spacingAndGlyphs">SMA</text>
<path d="M639 23.3q2.2-2 4.5 0t4.5 0t4.5 0t4.5 0" stroke="#6464e0" stroke-width="1.2" fill="none"/>
<path d="M684 9V21" stroke="#9c9c9c" stroke-width="1.3"/><path d="M684.5 9.3L691 11.8L684.5 14.3Z" fill="#a8a8a8"/><path d="M676.6 24.3Q684.5 17.5 692 24.3Z" fill="#b4b4b4"/>
<rect x="711.8" y="9.8" width="15.4" height="15.4" fill="#fff" stroke="#1a1a1a" stroke-width="1.7"/><rect x="713" y="22" width="13" height="2.4" fill="#bbb"/>
<path d="M713 22L717.5 16L720.5 19L722.5 17L726 22Z" fill="#111"/><circle cx="722.2" cy="12.8" r="1.3" fill="#111"/>
<path d="M735.5 10.5V24" stroke="#d0d0d0"/>
<path d="M793.5 11.5H803L805.5 14V23.5H793.5Z" fill="none" stroke="#222" stroke-width="1.4"/><rect x="796.5" y="11.5" width="6" height="3.5" fill="#222"/><rect x="796" y="18" width="7" height="5" fill="none" stroke="#222" stroke-width="1.2"/>
<path d="M828.2 12.6A6.1 6.1 0 1 0 828.9 19.3" stroke="#0a0a0a" stroke-width="2.7" fill="none"/><path d="M824.5 10L831 9.2L830.2 15.8Z" fill="#0a0a0a" stroke="#0a0a0a" stroke-width="0.8"/>
<path d="M840 24L848 16L852 20L856 24Z" fill="#c8c8c8"/><path d="M843 22L855 10M845 17L853 24" stroke="#bcbcbc" stroke-width="1.2"/><circle cx="842" cy="19" r="1.6" fill="none" stroke="#bcbcbc"/><circle cx="844" cy="23" r="1.6" fill="none" stroke="#bcbcbc"/>
<path d="M862.5 10V27" stroke="#d6d6d6"/>
</svg>
<div class="t" style="left:23px;top:846px;font-size:12.2px;color:#333">Y-Axis:</div>
<div class="t" style="left:238.5px;top:846px;font-size:12.2px;color:#333">X-Axis:</div>
<div class="t" style="left:281px;top:846px;font-size:12.2px;color:#333;letter-spacing:-0.3px">keV</div>
<div class="t" style="left:497px;top:846px;font-size:12.2px;color:#333">View:</div>
<div class="t" style="left:741.5px;top:846px;font-size:12.2px;color:#333">Modify:</div>

<!-- Measurement Control panel -->
<div class="a" style="left:1144px;top:55px;width:451px;height:577px;background:#f0f0f0;border:1px solid #5d7098;border-bottom:none"></div>
<div class="a" style="left:1144px;top:55px;width:451px;height:22px;background:#4d6083;border:1px solid #6a7da3;border-bottom:none"></div>
<div class="t" style="left:1149px;top:60px;font-size:12.4px;color:#eef1f8">Measurement Control</div>
<svg class="a" style="left:1556px;top:58px" width="36" height="16">
<path d="M7.5 2.5H12.5M8.5 2.5V9.5M11.5 2.5V9.5M6.5 9.5H13.5M10 9.5V14" stroke="#e6eaf4" stroke-width="1.2" fill="none"/>
<path d="M21.5 3.5L30.5 12.5M30.5 3.5L21.5 12.5" stroke="#e6eaf4" stroke-width="1.4"/>
</svg>

<div class="t" style="left:1161px;top:90px">Save to</div>
<div class="fld" style="left:1244px;top:87px;width:250px;height:21px"></div>
<div class="t" style="left:1247px;top:90px">K40_banana2.xml</div>
<div class="btn" style="left:1502px;top:86px;width:50px;height:21px"></div>
<div class="t" style="left:1510px;top:89px">Select.</div>

<div class="a" style="left:1244px;top:114px;width:13px;height:14px;border:1px solid #333;border-radius:2px;background:#fff"></div>
<div class="t" style="left:1264px;top:114px">Save Automatically When Finished</div>

<div class="t" style="left:1161px;top:139px">Device Config.</div>
<div class="cmb" style="left:1244px;top:136px;width:250px;height:22px"></div>
<div class="t" style="left:1248px;top:140px">103_b</div>
<div class="btn" style="left:1502px;top:136px;width:50px;height:21px"></div>
<div class="t" style="left:1512px;top:139px">Edit...</div>
<div class="btn" style="left:1557px;top:136px;width:24px;height:21px"></div>

<div class="t" style="left:1161px;top:166px">ROI Config.</div>
<div class="cmb" style="left:1244px;top:163px;width:250px;height:22px"></div>
<div class="t" style="left:1248px;top:167px">RadiaCode Marinelli 0.5</div>
<div class="btn" style="left:1502px;top:163px;width:50px;height:21px"></div>
<div class="t" style="left:1512px;top:166px">Edit...</div>
<div class="btn" style="left:1557px;top:163px;width:24px;height:21px"></div>

<div class="t" style="left:1161px;top:193px">Background</div>
<div class="fld" style="left:1244px;top:190px;width:250px;height:21px"></div>
<div class="t" style="left:1247px;top:193px">Background_48hr2.xml</div>
<div class="btn" style="left:1502px;top:189px;width:50px;height:22px;border:1px solid #3d7fd0"></div>
<div class="t" style="left:1510px;top:192px">Select.</div>
<div class="btn" style="left:1557px;top:189px;width:24px;height:22px"></div>

<svg class="a" style="left:1480px;top:136px" width="110" height="80">
<path d="M1.5 8.5L5.5 12.5L9.5 8.5" stroke="#8a8a8a" stroke-width="1.3" fill="none"/>
<path d="M1.5 35.5L5.5 39.5L9.5 35.5" stroke="#8a8a8a" stroke-width="1.3" fill="none"/>
<path d="M92.2 5.3A6 6 0 1 0 94.6 11.8" stroke="#0c0c0c" stroke-width="2.6" fill="none"/>
<path d="M89.6 2.6L96.6 2.4L94.6 9.4Z" fill="#0c0c0c"/>
<path d="M84.5 32.5L93.5 41.5M93.5 32.5L84.5 41.5" stroke="#111" stroke-width="2.2"/>
<path d="M84.5 59.5L93.5 68.5M93.5 59.5L84.5 68.5" stroke="#111" stroke-width="2.2"/>
</svg>

<!-- group box -->
<div class="a" style="left:1157px;top:220px;width:426px;height:398px;border:1px solid #dadada"></div>
<div class="t" style="left:1171px;top:236px">Real Time</div>
<div class="a" style="left:1244px;top:234px;width:251px;height:18px;background:#0da82a"></div>
<div class="t" style="left:1244px;top:236px;width:251px;text-align:center;color:#111">166400 (100.0%)</div>
<div class="a" style="left:1502px;top:234px;width:64px;height:19px;background:#fff;border:1px solid #e2e2e2;border-bottom:1px solid #9a9a9a"></div>
<div class="t" style="left:1502px;top:236px;width:61px;text-align:right">166400</div>

<div class="btn" style="left:1266px;top:260px;width:84px;height:22px"></div>
<svg class="a" style="left:1270px;top:264px" width="14" height="14"><circle cx="7" cy="7" r="5.3" fill="#ee1111"/></svg>
<div class="t" style="left:1296px;top:264px">Start</div>
<div class="btn" style="left:1362px;top:260px;width:83px;height:22px;background:#f6f6f6;border-color:#ebebeb"></div>
<svg class="a" style="left:1367px;top:264px" width="14" height="14"><path d="M3 2.5V11.5M8 2.5V11.5" stroke="#555" stroke-width="2.4"/></svg>
<div class="t" style="left:1392px;top:264px;color:#a0a0a0">Stop</div>
<div class="btn" style="left:1481px;top:260px;width:84px;height:22px"></div>
<svg class="a" style="left:1484px;top:264px" width="14" height="14"><path d="M2.5 2.5L11.5 11.5M11.5 2.5L2.5 11.5" stroke="#111" stroke-width="2.2"/></svg>
<div class="t" style="left:1509px;top:264px">Clear</div>

<div class="t" style="left:1171px;top:294px">Total Counts</div>
<div class="fld" style="left:1272px;top:292px;width:76px;height:20px"></div>
<div class="t" style="left:1272px;top:294px;width:74px;text-align:right">775741</div>
<div class="t" style="left:1170px;top:320px">Count Rate (cps)</div>
<div class="fld" style="left:1272px;top:318px;width:76px;height:20px"></div>
<div class="t" style="left:1272px;top:320px;width:74px;text-align:right">4.66</div>
<div class="t" style="left:1171px;top:347px">Dead Time %</div>
<div class="fld" style="left:1272px;top:344px;width:76px;height:19px"></div>
<div class="t" style="left:1272px;top:346px;width:74px;text-align:right">0.0023</div>

<div class="t" style="left:1384px;top:294px">Valid Counts</div>
<div class="fld" style="left:1468px;top:292px;width:76px;height:20px"></div>
<div class="t" style="left:1468px;top:294px;width:74px;text-align:right">775741</div>
<div class="t" style="left:1384px;top:320px">Invalid Counts</div>
<div class="fld" style="left:1468px;top:318px;width:76px;height:20px"></div>
<div class="t" style="left:1468px;top:320px;width:74px;text-align:right">0</div>
<div class="t" style="left:1384px;top:347px">Live Time</div>
<div class="fld" style="left:1468px;top:344px;width:76px;height:19px"></div>
<div class="t" style="left:1468px;top:346px;width:74px;text-align:right">166396.12</div>

<!-- panel tabs -->
<div class="a" style="left:1144px;top:632px;width:63px;height:21px;background:#fff"></div>
<div class="t" style="left:1150px;top:636px;font-size:12px;color:#222">Measur...</div>
<div class="t" style="left:1214px;top:636px;font-size:12px;color:#e8ecf4">Energy ...</div>
<div class="t" style="left:1278px;top:636px;font-size:12px;color:#e8ecf4">Spectru...</div>
<div class="t" style="left:1344px;top:636px;font-size:12px;color:#e8ecf4">Sample...</div>
<div class="t" style="left:1409px;top:636px;font-size:12px;color:#e8ecf4">Peak D...</div>
<div class="t" style="left:1473px;top:636px;font-size:12px;color:#e8ecf4">Measur...</div>
<div class="t" style="left:1537px;top:636px;font-size:12px;color:#e8ecf4">Measur...</div>

<!-- Counts Rate panel -->
<div class="a" style="left:1144px;top:660px;width:451px;height:207px;background:#f0f0f0;border:1px solid #5d7098"></div>
<div class="a" style="left:1144px;top:660px;width:451px;height:22px;background:#4d6083;border:1px solid #6a7da3;border-bottom:none"></div>
<div class="t" style="left:1149px;top:665px;font-size:12.4px;color:#eef1f8">Counts Rate</div>
<svg class="a" style="left:1556px;top:663px" width="36" height="16">
<path d="M7.5 2.5H12.5M8.5 2.5V9.5M11.5 2.5V9.5M6.5 9.5H13.5M10 9.5V14" stroke="#e6eaf4" stroke-width="1.2" fill="none"/>
<path d="M21.5 3.5L30.5 12.5M30.5 3.5L21.5 12.5" stroke="#e6eaf4" stroke-width="1.4"/>
</svg>
<div class="t" style="left:1156px;top:700px">Counts Rate</div>
<div class="bfld" style="left:1242px;top:692px;width:122px;height:33px"></div>
<div class="t" style="left:1242px;top:698px;width:113px;text-align:right;font-size:20.5px;line-height:22px;font-weight:bold;color:#111">0.00</div>
<div class="t" style="left:1375px;top:700px">cps</div>
<div class="t" style="left:1157px;top:745px">Dead Time</div>
<div class="bfld" style="left:1264px;top:737px;width:97px;height:25px"></div>
<div class="t" style="left:1242px;top:739px;width:113px;text-align:right;font-size:20.5px;line-height:22px;font-weight:bold;color:#111">0.0000</div>
<div class="t" style="left:1379px;top:745px">%</div>
<div class="t" style="left:1157px;top:782px">Loss Counts Ratio</div>
<div class="bfld" style="left:1264px;top:774px;width:97px;height:25px"></div>
<div class="t" style="left:1242px;top:776px;width:113px;text-align:right;font-size:20.5px;line-height:22px;font-weight:bold;color:#111">0</div>
<div class="t" style="left:1379px;top:782px">%</div>
<div class="t" style="left:1158px;top:815px">Time Constant</div>
<div class="a" style="left:1256px;top:811px;width:56px;height:21px;background:#fff;border:1px solid #b5b5b5"></div>
<div class="t" style="left:1256px;top:814px;width:38px;text-align:right">3.00</div>
<svg class="a" style="left:1295px;top:812px" width="16" height="19">
<path d="M4 7.5H11L7.5 3.5Z M4 11.5H11L7.5 15.5Z" fill="#333"/>
<path d="M1.5 9.5H14" stroke="#ddd"/>
</svg>
<div class="t" style="left:1322px;top:816px">sec</div>

</body></html>
